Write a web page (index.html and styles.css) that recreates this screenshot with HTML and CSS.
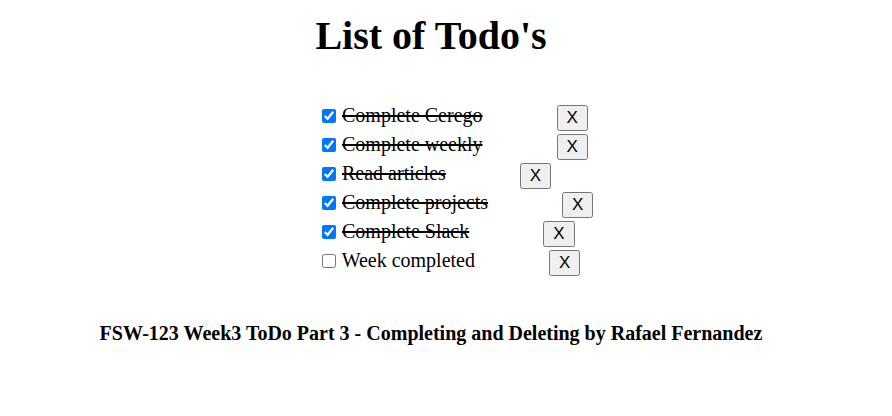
FILE: index.html
```html
<!DOCTYPE html>
<html>
<head>
<meta charset="utf-8">
<link rel="stylesheet" href="styles.css">
</head>
<body>
<div class="app">
  <h1 class="title">List of Todo's</h1>
  <div class="list">
    <div class="row"><input type="checkbox" checked> <span class="done">Complete Cerego</span><button class="del">X</button></div>
    <div class="row"><input type="checkbox" checked> <span class="done">Complete weekly</span><button class="del">X</button></div>
    <div class="row"><input type="checkbox" checked> <span class="done">Read articles</span><button class="del">X</button></div>
    <div class="row"><input type="checkbox" checked> <span class="done">Complete projects</span><button class="del">X</button></div>
    <div class="row"><input type="checkbox" checked> <span class="done">Complete Slack</span><button class="del">X</button></div>
    <div class="row"><input type="checkbox"> <span>Week completed</span><button class="del">X</button></div>
  </div>
  <h3 class="footer">FSW-123 Week3 ToDo Part 3 - Completing and Deleting by Rafael Fernandez</h3>
</div>
</body>
</html>
```
FILE: styles.css
```css
html, body {
  margin: 0;
  padding: 0;
  background: #fff;
}
body {
  font-family: "Liberation Serif", "Times New Roman", serif;
  color: #000;
}
.app {
  margin: 0 38px 0 8px;
  padding-top: 1px;
}
.title {
  text-align: center;
  font-size: 40px;
  font-weight: bold;
  margin: 11px 0 0;
}
.list {
  margin: 45px 0 0 310px;
}
.row {
  font-size: 20px;
  height: 29px;
}
.row input {
  width: 14px;
  height: 14px;
  margin: 3px 1px 3px 4px;
  vertical-align: -1px;
}
.done {
  text-decoration: line-through;
}
.del {
  font-family: Arial, "Liberation Sans", sans-serif;
  font-size: 17px;
  margin-left: 74px;
  padding: 1px 8px;
  vertical-align: -1px;
}
.footer {
  text-align: center;
  font-size: 20px;
  margin: 44px 0 0;
}
```
